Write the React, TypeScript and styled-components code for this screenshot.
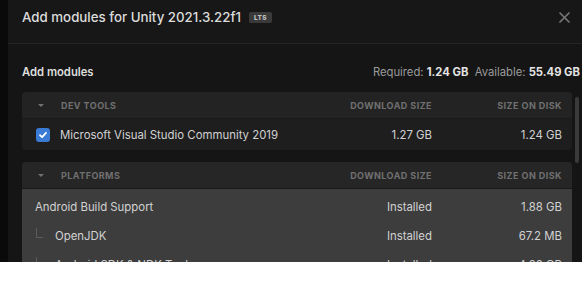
import React from "react";
import styled, { createGlobalStyle } from "styled-components";

const Global = createGlobalStyle`
  *, *::before, *::after { box-sizing: border-box; }
  html, body { margin: 0; padding: 0; background: #ffffff; }
  body { font-family: Inter, "Noto Sans", sans-serif; -webkit-font-smoothing: antialiased; }
`;

const Frame = styled.div`
  display: flex;
  width: 582px;
  height: 262px;
  overflow: hidden;
  background: #0a0a0a;
`;

const Strip = styled.div`
  width: 8px;
  flex: none;
  background: #0a0a0a;
`;

const Dialog = styled.div`
  flex: 1;
  display: flex;
  flex-direction: column;
  background: #151515;
  min-width: 0;
`;

const Header = styled.header`
  height: 44px;
  flex: none;
  display: flex;
  align-items: flex-start;
  padding: 7px 11px 0 14px;
  background: #171717;
  border-bottom: 1px solid #252525;
`;

const Title = styled.h1`
  margin: 0;
  font-size: 13.3px;
  font-weight: 500;
  line-height: 20px;
  color: #dcdcdc;
`;

const Badge = styled.span`
  margin: 5px 0 0 8px;
  height: 11px;
  padding: 0 5px;
  display: inline-flex;
  align-items: center;
  background: #3a3a3a;
  border-radius: 2px;
  color: #c0c0c0;
  font-size: 6.5px;
  font-weight: 800;
  letter-spacing: 0.4px;
`;

const Close = styled.button`
  margin: 4px 0 0 auto;
  width: 13px;
  height: 13px;
  padding: 0;
  border: 0;
  background: transparent;
  color: #777;
  display: flex;
`;

const Body = styled.div`
  padding: 0 2px 0 14px;
  display: flex;
  flex-direction: column;
`;

const Summary = styled.div`
  display: flex;
  justify-content: space-between;
  align-items: center;
  height: 16px;
  margin: 20px 0 12px;
  font-size: 11.25px;
  line-height: 16px;
`;

const SummaryTitle = styled.span`
  font-weight: 600;
  color: #dedede;
`;

const Stats = styled.span`
  color: #9b9b9b;
  white-space: nowrap;
  b { color: #e4e4e4; font-weight: 700; }
`;

const ListArea = styled.div`
  display: flex;
  align-items: flex-start;
`;

const Cards = styled.div`
  width: 550px;
  flex: none;
  display: flex;
  flex-direction: column;
  gap: 12px;
`;

const Gutter = styled.div`
  width: 8px;
  flex: none;
  padding: 5px 0 0 3px;
`;

const Thumb = styled.div`
  width: 4px;
  height: 66px;
  border-radius: 2px;
  background: #3a3a3a;
`;

const Card = styled.section`
  border-radius: 4px;
  overflow: hidden;
  background: #1e1e1e;
`;

const Grid = styled.div`
  display: grid;
  grid-template-columns: 1fr 140px 130px;
  align-items: center;
  padding-right: 10px;
`;

const HeadRow = styled(Grid)<{ $tone: string }>`
  height: 27px;
  background: ${(p) => p.$tone};
  border-bottom: 1px solid #1a1a1a;
  font-size: 9px;
  font-weight: 700;
  letter-spacing: 0.45px;
  color: #707070;
  text-transform: uppercase;
`;

const HeadLabel = styled.div`
  display: flex;
  align-items: center;
  gap: 17px;
  padding-left: 16px;
`;

const Caret = styled.span`
  width: 0;
  height: 0;
  border-left: 3.5px solid transparent;
  border-right: 3.5px solid transparent;
  border-top: 3.5px solid #707070;
`;

const Num = styled.div`
  text-align: right;
`;

const Rows = styled.div<{ $bg: string; $pad: number }>`
  background: ${(p) => p.$bg};
  padding-top: ${(p) => p.$pad}px;
`;

const Row = styled(Grid)<{ $h: number }>`
  height: ${(p) => p.$h}px;
  font-size: 11.4px;
  color: #d2d2d2;
`;

const Name = styled.div<{ $indent: number }>`
  display: flex;
  align-items: center;
  gap: 10px;
  padding-left: ${(p) => p.$indent}px;
  white-space: nowrap;
  position: relative;
`;

const Check = styled.span`
  width: 14px;
  height: 14px;
  border-radius: 3px;
  background: #3a7bd5;
  display: flex;
  align-items: center;
  justify-content: center;
`;

const Branch = styled.span`
  position: absolute;
  left: 14px;
  top: -1px;
  width: 7px;
  height: 10px;
  border-left: 1px solid #5c5c5c;
  border-bottom: 1px solid #5c5c5c;
`;

const platforms = [
  { name: "Android Build Support", dl: "Installed", disk: "1.88 GB", child: false },
  { name: "OpenJDK", dl: "Installed", disk: "67.2 MB", child: true },
  { name: "Android SDK & NDK Tools", dl: "Installed", disk: "4.20 GB", child: true },
];

export default function App() {
  return (
    <>
      <Global />
      <Frame>
        <Strip />
        <Dialog>
          <Header>
            <Title>Add modules for Unity 2021.3.22f1</Title>
            <Badge>LTS</Badge>
            <Close aria-label="Close">
              <svg width="13" height="13" viewBox="0 0 13 13" fill="none" stroke="currentColor" strokeWidth="1.6">
                <path d="M1.5 1.5 L11.5 11.5 M11.5 1.5 L1.5 11.5" />
              </svg>
            </Close>
          </Header>
          <Body>
            <Summary>
              <SummaryTitle>Add modules</SummaryTitle>
              <Stats>
                Required: <b>1.24 GB</b>&nbsp; Available: <b>55.49 GB</b>
              </Stats>
            </Summary>
            <ListArea>
              <Cards>
                <Card>
                  <HeadRow $tone="#232323">
                    <HeadLabel>
                      <Caret />
                      Dev tools
                    </HeadLabel>
                    <Num>Download size</Num>
                    <Num>Size on disk</Num>
                  </HeadRow>
                  <Rows $bg="#1e1e1e" $pad={0}>
                    <Row $h={31}>
                      <Name $indent={14}>
                        <Check>
                          <svg width="10" height="10" viewBox="0 0 10 10" fill="none" stroke="#fff" strokeWidth="1.8" strokeLinecap="round" strokeLinejoin="round">
                            <path d="M2 5.2 L4.1 7.2 L8 2.8" />
                          </svg>
                        </Check>
                        Microsoft Visual Studio Community 2019
                      </Name>
                      <Num>1.27 GB</Num>
                      <Num>1.24 GB</Num>
                    </Row>
                  </Rows>
                </Card>
                <Card>
                  <HeadRow $tone="#262626">
                    <HeadLabel>
                      <Caret />
                      Platforms
                    </HeadLabel>
                    <Num>Download size</Num>
                    <Num>Size on disk</Num>
                  </HeadRow>
                  <Rows $bg="#3d3d3d" $pad={3}>
                    {platforms.map((p) => (
                      <Row $h={29} key={p.name}>
                        <Name $indent={p.child ? 33 : 13}>
                          {p.child && <Branch />}
                          {p.name}
                        </Name>
                        <Num>{p.dl}</Num>
                        <Num>{p.disk}</Num>
                      </Row>
                    ))}
                  </Rows>
                </Card>
              </Cards>
              <Gutter>
                <Thumb />
              </Gutter>
            </ListArea>
          </Body>
        </Dialog>
      </Frame>
    </>
  );
}
